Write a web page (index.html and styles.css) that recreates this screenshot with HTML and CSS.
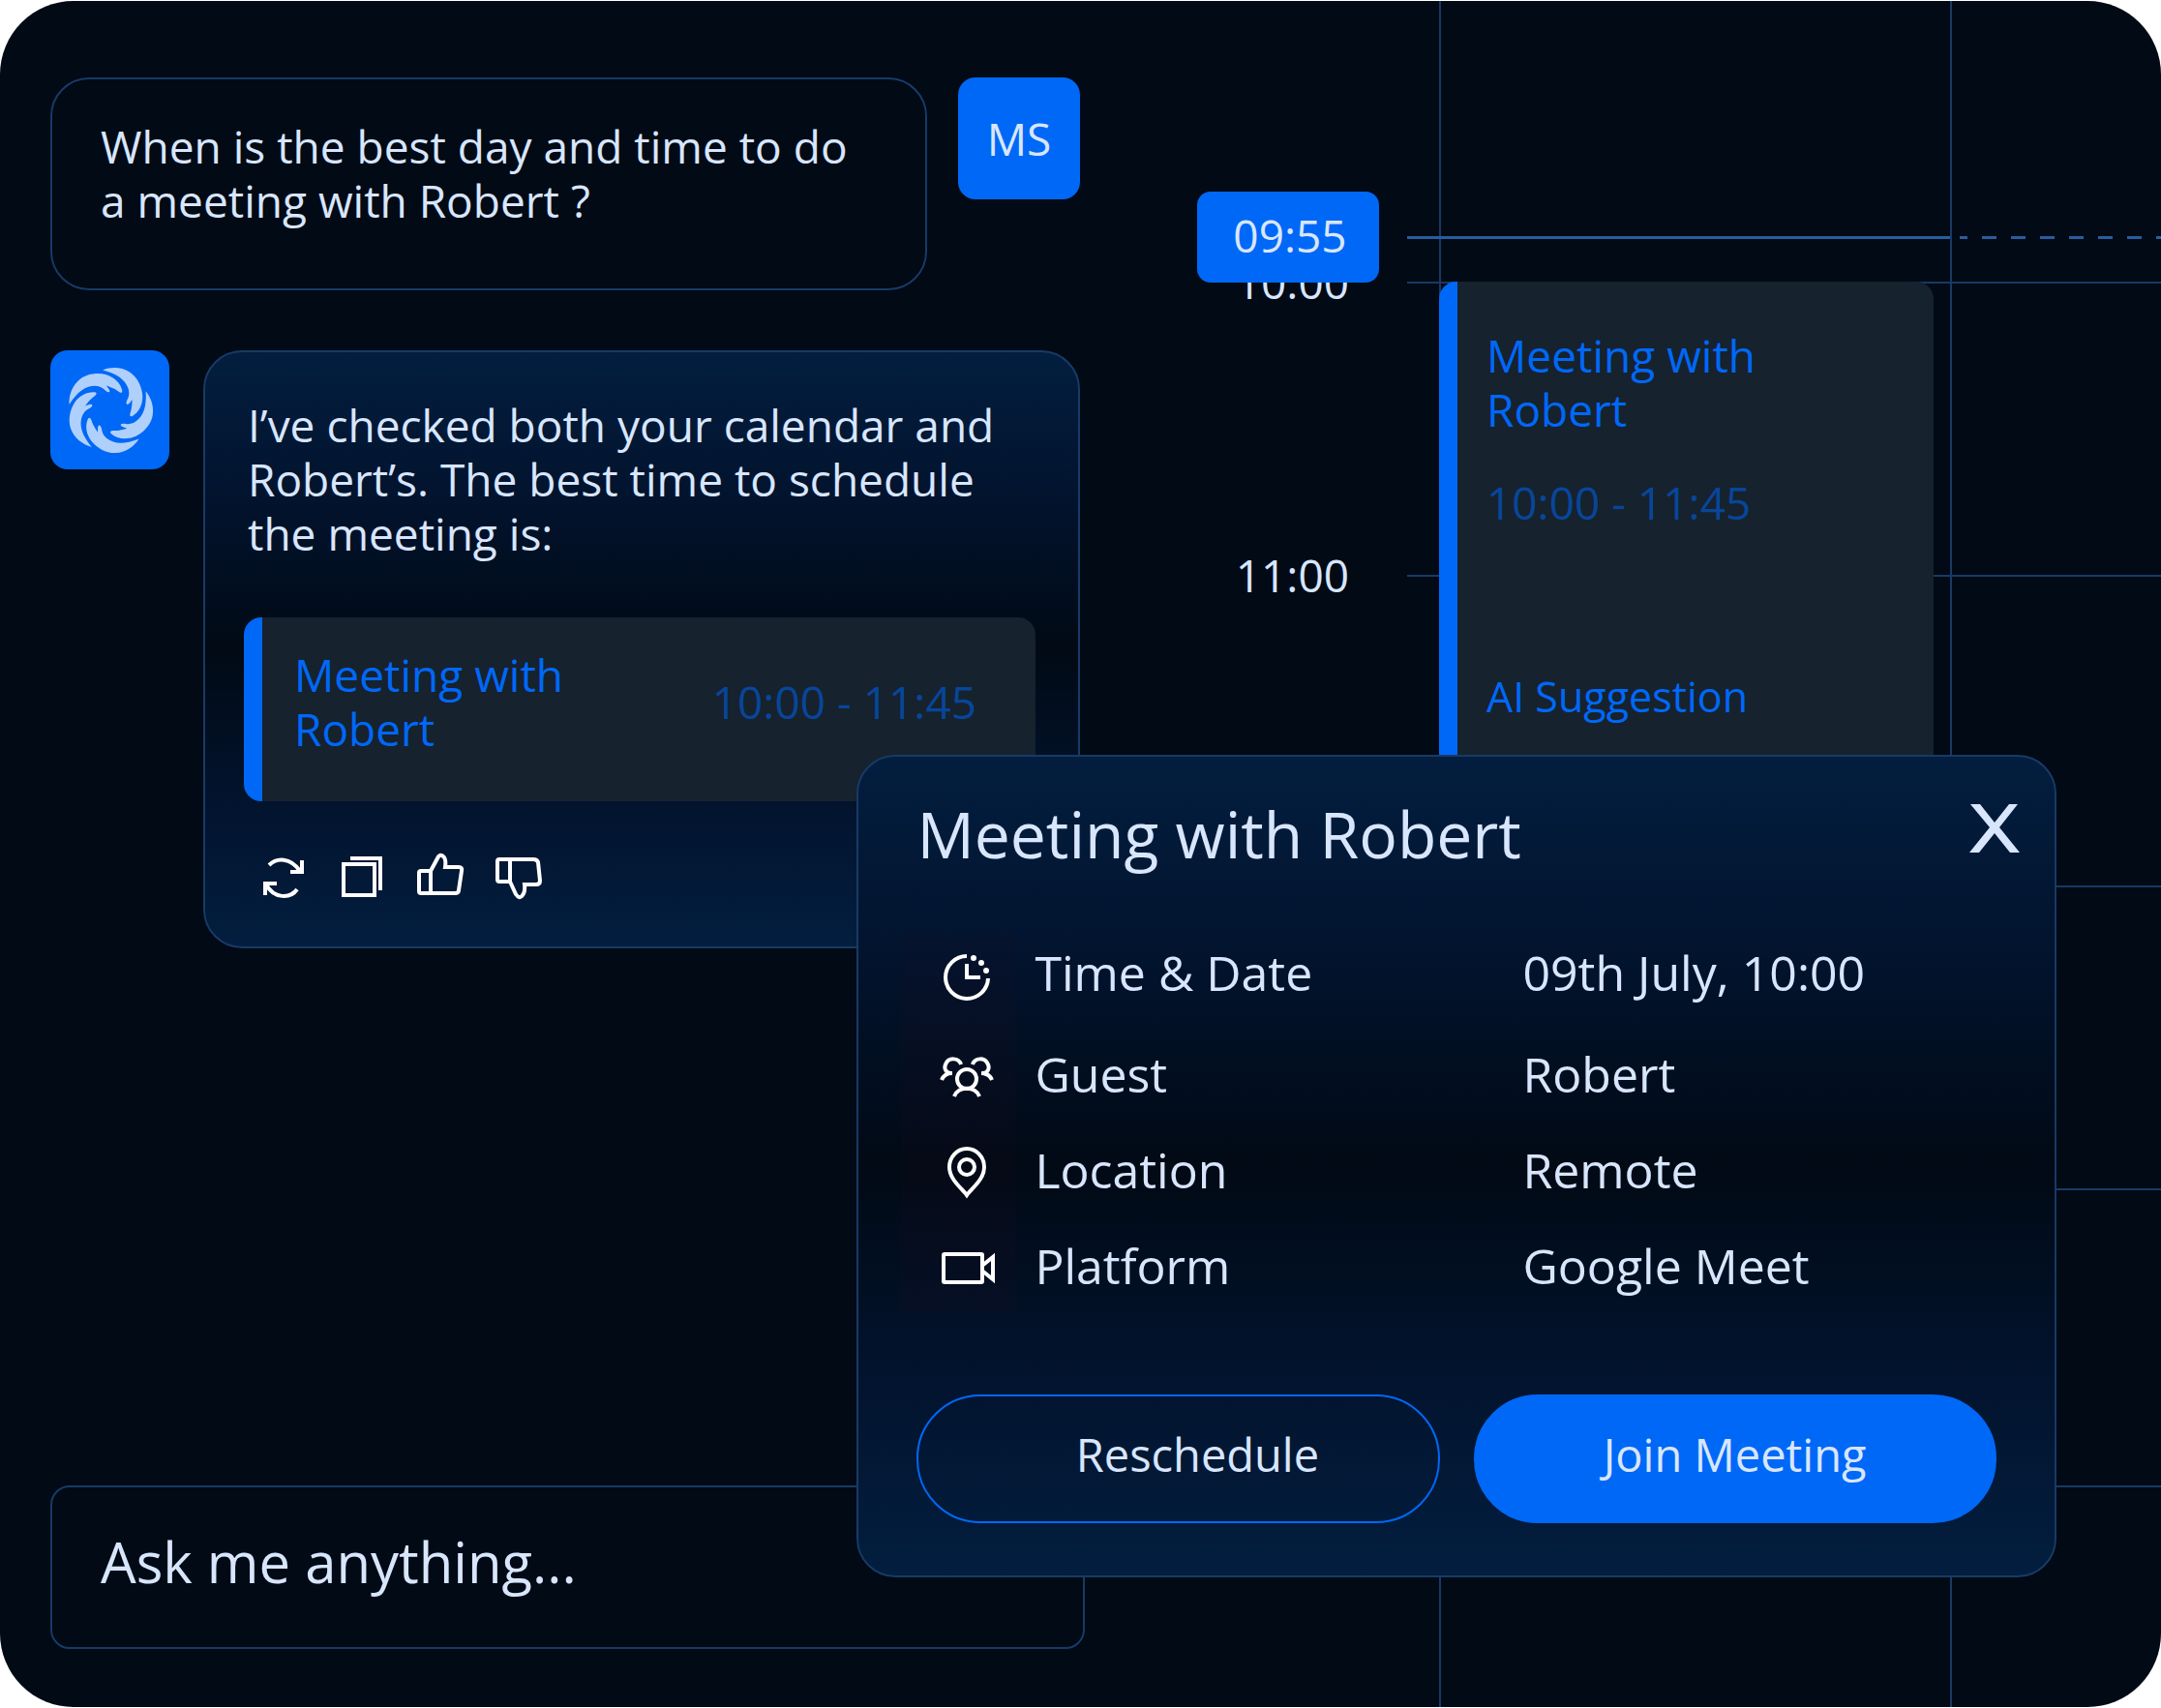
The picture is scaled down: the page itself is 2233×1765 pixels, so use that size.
FILE: index.html
```html
<!DOCTYPE html>
<html lang="en">
<head>
<meta charset="utf-8">
<meta name="viewport" content="width=device-width, initial-scale=1">
<title>Meeting assistant</title>
<link rel="stylesheet" href="styles.css">
</head>
<body>
<div class="app">
  <main class="chat">
    <div class="messages">
      <section class="message">
        <p class="bubble bubble-user">When is the best day and time to do a meeting with Robert ?</p>
        <span class="avatar avatar-user">MS</span>
      </section>
      <section class="message message-ai">
        <span class="avatar avatar-ai">
          <svg viewBox="-185 -187 371 371" aria-hidden="true">
            <defs>
              <path id="petal" d="M-126-18C-128-48-116-78-94-96C-72-114-38-119-10-111C16-103 34-84 39-62C40-54 35-53 27-59C19-65 10-70-10-77C-8-72 0-66 0-59C-1-54-8-56-15-63C-22-70-30-75-44-76C-76-77-101-57-126-18Z"/>
            </defs>
            <g class="logo-mark">
              <use href="#petal"/>
              <use href="#petal" transform="rotate(72)"/>
              <use href="#petal" transform="rotate(144)"/>
              <use href="#petal" transform="rotate(216)"/>
              <use href="#petal" transform="rotate(288)"/>
            </g>
          </svg>
        </span>
        <div class="bubble bubble-ai">
          <p class="answer">I’ve checked both your calendar and Robert’s. The best time to schedule the meeting is:</p>
          <div class="event event-inline">
            <h3 class="event-title">Meeting with Robert</h3>
            <time class="event-time">10:00 - 11:45</time>
          </div>
          <div class="reactions">
            <button type="button" class="icon-button" aria-label="Regenerate">
              <svg viewBox="0 0 48 48" aria-hidden="true"><path d="M9 12C17 4 31 4 41 18M43 7V19H31M5 43V31H17M6 32C14 47 31 47 38 37"/></svg>
            </button>
            <button type="button" class="icon-button" aria-label="Copy">
              <svg viewBox="0 0 48 48" aria-hidden="true"><path d="M5 11H37V43H5ZM12 5H43V38"/></svg>
            </button>
            <button type="button" class="icon-button" aria-label="Good answer">
              <svg viewBox="0 0 48 48" aria-hidden="true"><path d="M3 18H14V41H4Q2 41 2 39V20Q2 18 4 18M14 18L21 5Q24-1 28 4Q30 7 29 14H43Q47 14 46 18L43 38Q43 41 39 41H14"/></svg>
            </button>
            <button type="button" class="icon-button" aria-label="Bad answer">
              <svg viewBox="0 0 48 48" aria-hidden="true"><path d="M14 6H4Q2 6 2 8V27Q2 29 4 29H15V6H39Q43 6 44 9L46 28Q46 32 42 32H30Q31 39 28 43Q25 48 21 42L15 29"/></svg>
            </button>
          </div>
        </div>
      </section>
    </div>
    <form class="composer">
      <input class="composer-input" type="text" placeholder="Ask me anything..." aria-label="Ask me anything">
    </form>
  </main>

  <section class="calendar" aria-label="Calendar">
    <div class="day-line day-line-start"></div>
    <div class="day-line day-line-end"></div>
    <div class="hour-line hour-10"></div>
    <div class="hour-line hour-11"></div>
    <div class="hour-line hour-12"></div>
    <div class="hour-line hour-13"></div>
    <div class="hour-line hour-14"></div>
    <span class="hour-label hour-10">10:00</span>
    <span class="hour-label hour-11">11:00</span>
    <div class="now-line"></div>
    <div class="now-line-next"></div>
    <span class="now-chip">09:55</span>
    <article class="event event-block">
      <h3 class="event-title">Meeting with Robert</h3>
      <time class="event-time">10:00 - 11:45</time>
      <p class="event-note">AI Suggestion</p>
    </article>
  </section>

  <div class="dialog" role="dialog" aria-labelledby="dialog-title">
    <header class="dialog-header">
      <h2 id="dialog-title" class="dialog-title">Meeting with Robert</h2>
      <button type="button" class="close-button" aria-label="Close">
        <svg viewBox="0 0 52 50" aria-hidden="true"><path d="M1 0H11L26 19L41 0H50L31 24L52 50H42L26 30L10 50H0L21 24Z"/></svg>
      </button>
    </header>
    <dl class="details">
      <div class="detail">
        <dt class="detail-label">
          <svg class="detail-icon" viewBox="0 0 60 60" aria-hidden="true"><path d="M30 13A22 22 0 1 0 52 36"/><path d="M30 21V35H44"/><g class="dots"><circle cx="37" cy="15" r="3"/><circle cx="45" cy="20" r="3"/><circle cx="50" cy="28" r="3"/></g></svg>
          Time &amp; Date
        </dt>
        <dd class="detail-value">09th July, 10:00</dd>
      </div>
      <div class="detail">
        <dt class="detail-label">
          <svg class="detail-icon" viewBox="0 0 60 60" aria-hidden="true"><circle cx="30" cy="35" r="10"/><path d="M17 53C21 42 39 42 43 53M24 20C22 13 11 12 8 20C6 25 9 29 14 29M4 36C6 31 10 29 15 29M36 20C38 13 49 12 52 20C54 25 51 29 46 29M56 36C54 31 50 29 45 29"/></svg>
          Guest
        </dt>
        <dd class="detail-value">Robert</dd>
      </div>
      <div class="detail">
        <dt class="detail-label">
          <svg class="detail-icon" viewBox="0 0 60 60" aria-hidden="true"><path d="M30 56C25 49 12 40 12 27A18 19 0 0 1 48 27C48 40 35 49 30 56Z"/><circle cx="30" cy="27" r="8"/></svg>
          Location
        </dt>
        <dd class="detail-value">Remote</dd>
      </div>
      <div class="detail">
        <dt class="detail-label">
          <svg class="detail-icon" viewBox="0 0 60 60" aria-hidden="true"><rect x="6" y="18" width="40" height="29" rx="1"/><path d="M47 29L57 21V44L47 36"/></svg>
          Platform
        </dt>
        <dd class="detail-value">Google Meet</dd>
      </div>
    </dl>
    <div class="actions">
      <button type="button" class="button button-outline">Reschedule</button>
      <button type="button" class="button button-primary">Join Meeting</button>
    </div>
  </div>
</div>
</body>
</html>
```
FILE: styles.css
```css
:root {
  --bg: #010a15;
  --line: #183a66;
  --blue: #0068f7;
  --blue-dim: #07469a;
  --text: #d8e6fd;
  --event: #16222e;
  --panel: linear-gradient(#031e3f, #02132d 25%, #010a15 50%, #02132d 75%, #031e3f);
}

*, *::before, *::after {
  box-sizing: border-box;
}

body {
  margin: 0;
  background: #fff;
  color: var(--text);
  font-family: "Open Sans", "Noto Sans", sans-serif;
  font-size: 46px;
  line-height: 56px;
}

h2, h3, p, dl, dd {
  margin: 0;
  font-weight: 400;
}

button, input {
  font: inherit;
  color: inherit;
}

svg {
  display: block;
}

.app {
  position: relative;
  display: grid;
  grid-template-columns: 1121fr 1112fr;
  min-height: calc(100vh - 2px);
  margin: 1px 0;
  overflow: hidden;
  border-radius: 76px;
  background: var(--bg);
}

/* Chat */

.chat {
  display: flex;
  flex-direction: column;
  justify-content: space-between;
  gap: 60px;
  min-width: 0;
  padding: 79px 0 60px 52px;
}

.messages {
  display: flex;
  flex-direction: column;
  gap: 62px;
  padding-right: 5px;
}

.message {
  display: flex;
  align-items: flex-start;
  gap: 32px;
}

.message-ai {
  gap: 35px;
}

.bubble {
  flex: 1;
  min-width: 0;
  border: 2px solid var(--line);
  border-radius: 40px;
}

.bubble-user {
  padding: 41px 50px 63px;
}

.bubble-ai {
  padding: 47px 44px 48px 40px;
  background: var(--panel);
}

.answer {
  padding-left: 4px;
}

.avatar {
  flex: none;
  display: grid;
  place-items: center;
  border-radius: 18px;
  background: var(--blue);
}

.avatar-user {
  width: 126px;
  height: 126px;
}

.avatar-ai {
  width: 123px;
  height: 123px;
}

.avatar-ai svg {
  width: 123px;
  height: 123px;
}

.logo-mark {
  fill: #b0d0fc;
}

.event {
  border-left: 19px solid var(--blue);
  border-radius: 18px;
  background: var(--event);
}

.event-title {
  max-width: 300px;
  color: var(--blue);
  font-size: 46px;
}

.event-time {
  color: var(--blue-dim);
}

.event-inline {
  display: flex;
  align-items: center;
  justify-content: space-between;
  margin-top: 59px;
  padding: 31px 61px 47px 33px;
}

.reactions {
  display: flex;
  gap: 33px;
  margin: 54px 0 0 17px;
}

.icon-button,
.close-button {
  padding: 0;
  border: 0;
  background: none;
}

.icon-button svg {
  width: 48px;
  height: 48px;
  overflow: visible;
  fill: none;
  stroke: #fff;
  stroke-width: 4;
}

.composer-input {
  display: block;
  width: 100%;
  height: 169px;
  padding: 0 50px 12px;
  border: 2px solid var(--line);
  border-radius: 20px;
  background: none;
  font-size: 58px;
}

.composer-input::placeholder {
  color: var(--text);
  opacity: 1;
}

/* Calendar */

.calendar {
  display: grid;
  grid-template-columns: 333fr 33fr 528fr 218fr;
  grid-template-rows: 198px 92px 303px 321px 313px 307px 1fr;
  min-width: 0;
}

.day-line {
  grid-row: 1 / -1;
  border-left: 2px solid var(--line);
}

.day-line-start {
  grid-column: 3;
}

.day-line-end {
  grid-column: 4;
}

.hour-line {
  grid-column: 2 / -1;
  border-top: 2px solid var(--line);
}

.hour-label {
  grid-column: 1;
  justify-self: end;
  align-self: start;
  margin: -28px 60px 0 0;
}

.hour-10 { grid-row: 3; }
.hour-11 { grid-row: 4; }
.hour-12 { grid-row: 5; }
.hour-13 { grid-row: 6; }
.hour-14 { grid-row: 7; }

.now-line,
.now-line-next {
  grid-row: 2;
  align-self: center;
  height: 3px;
}

.now-line {
  grid-column: 2 / 4;
  background: #2a5c9f;
}

.now-line-next {
  grid-column: 4;
  margin-left: 10px;
  background: repeating-linear-gradient(90deg, #2a5c9f 0 8px, transparent 8px 23px, #2a5c9f 23px 30px);
}

.now-chip {
  grid-row: 2;
  grid-column: 1;
  justify-self: end;
  align-self: center;
  display: grid;
  place-items: center;
  width: 188px;
  height: 94px;
  margin-right: 29px;
  padding: 0 0 4px 4px;
  border-radius: 14px;
  background: var(--blue);
}

.event-block {
  grid-row: 3 / 5;
  grid-column: 3;
  display: flex;
  flex-direction: column;
  margin: 0 17px 80px 0;
  padding: 48px 30px;
}

.event-block .event-time {
  margin-top: 40px;
}

.event-note {
  margin-top: 145px;
  color: var(--blue);
  font-size: 43px;
}

/* Meeting dialog */

.dialog {
  position: absolute;
  top: 779px;
  left: 39.65%;
  right: 4.85%;
  border: 2px solid var(--line);
  border-radius: 40px;
  background: var(--panel);
}

.dialog-header {
  display: flex;
  align-items: flex-start;
  justify-content: space-between;
  padding: 39px 36px 0 60px;
}

.dialog-title {
  font-size: 66px;
  line-height: 80px;
}

.close-button {
  margin-top: 10px;
}

.close-button svg {
  width: 52px;
  height: 50px;
  fill: var(--text);
}

.details {
  margin: 49px 61px 0 44px;
  background: linear-gradient(rgba(40, 8, 30, 0.1), rgba(40, 8, 30, 0.1)) 0 100% / 118px 391px no-repeat;
  font-size: 50px;
}

.detail {
  display: grid;
  grid-template-columns: 642px 1fr;
  align-items: center;
  height: 99px;
}

.detail:first-child {
  height: 110px;
}

.detail-label {
  display: flex;
  align-items: center;
  gap: 40px;
  padding-left: 38px;
}

.detail-icon {
  width: 60px;
  height: 60px;
  fill: none;
  stroke: #fff;
  stroke-width: 4;
}

.dots {
  fill: #fff;
  stroke: none;
}

.actions {
  display: grid;
  grid-template-columns: 1fr 1fr;
  gap: 35px;
  padding: 84px 60px 54px;
}

.button {
  height: 133px;
  padding: 0 0 10px;
  border: 2px solid var(--blue);
  border-radius: 66px;
  font-size: 47px;
}

.button-outline {
  padding-left: 40px;
  background: none;
}

.button-primary {
  background: var(--blue);
}
```
